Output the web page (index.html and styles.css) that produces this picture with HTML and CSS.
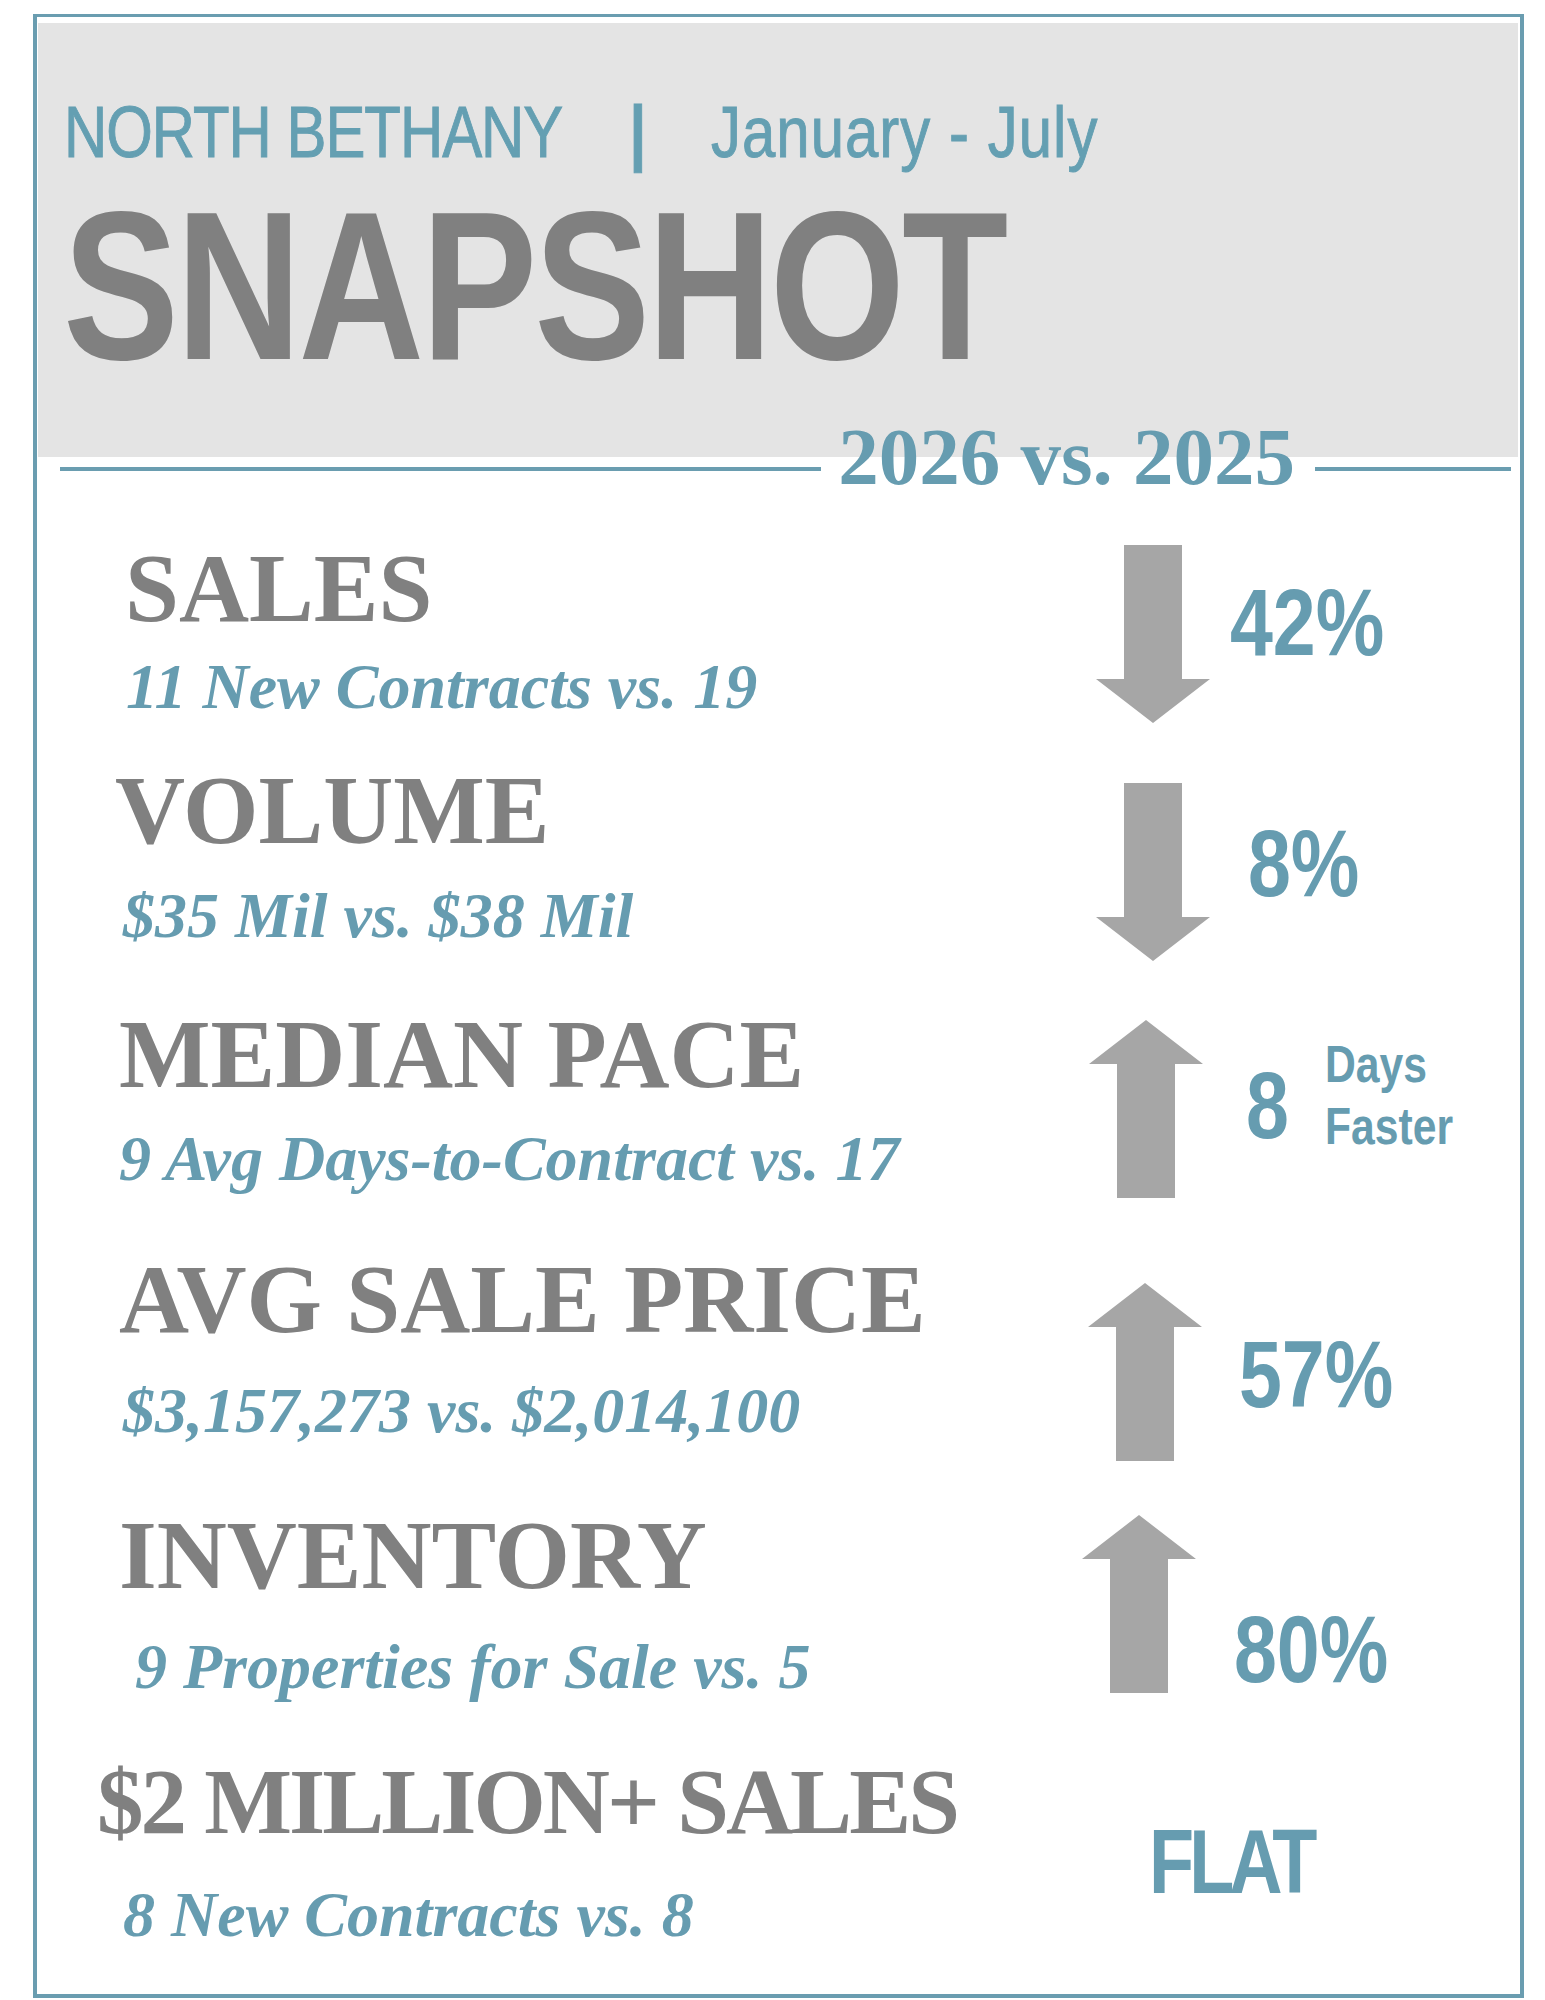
FILE: index.html
```html
<!DOCTYPE html>
<html lang="en">
<head>
<meta charset="utf-8">
<title>North Bethany Snapshot</title>
<link rel="stylesheet" href="styles.css">
</head>
<body>
<div class="card">
  <header class="hero">
    <div class="kicker"><span>NORTH BETHANY</span><span class="sep">|</span><span class="period">January - July</span></div>
    <h1 class="title">SNAPSHOT</h1>
  </header>
  <div class="legend">
    <span class="rule"></span>
    <span class="legend-text">2026 vs. 2025</span>
    <span class="rule rule-right"></span>
  </div>
  <div class="stats">
    <div class="row r1">
      <div class="text"><div class="label">SALES</div><div class="sub">11 New Contracts vs. 19</div></div>
      <div class="indicator">
        <svg class="arrow" viewBox="0 0 114 178"><path d="M28 0H86V134H114L57 178L0 134H28Z"/></svg>
        <div class="value">42%</div>
      </div>
    </div>
    <div class="row r2">
      <div class="text"><div class="label">VOLUME</div><div class="sub">$35 Mil vs. $38 Mil</div></div>
      <div class="indicator">
        <svg class="arrow" viewBox="0 0 114 178"><path d="M28 0H86V134H114L57 178L0 134H28Z"/></svg>
        <div class="value">8%</div>
      </div>
    </div>
    <div class="row r3">
      <div class="text"><div class="label">MEDIAN PACE</div><div class="sub">9 Avg Days-to-Contract vs. 17</div></div>
      <div class="indicator">
        <svg class="arrow" viewBox="0 0 114 178"><path d="M57 0L114 44H86V178H28V44H0Z"/></svg>
        <div class="value">8</div>
        <div class="unit">Days<br>Faster</div>
      </div>
    </div>
    <div class="row r4">
      <div class="text"><div class="label">AVG SALE PRICE</div><div class="sub">$3,157,273 vs. $2,014,100</div></div>
      <div class="indicator">
        <svg class="arrow" viewBox="0 0 114 178"><path d="M57 0L114 44H86V178H28V44H0Z"/></svg>
        <div class="value">57%</div>
      </div>
    </div>
    <div class="row r5">
      <div class="text"><div class="label">INVENTORY</div><div class="sub">9 Properties for Sale vs. 5</div></div>
      <div class="indicator">
        <svg class="arrow" viewBox="0 0 114 178"><path d="M57 0L114 44H86V178H28V44H0Z"/></svg>
        <div class="value">80%</div>
      </div>
    </div>
    <div class="row r6">
      <div class="text"><div class="label">$2 MILLION+ SALES</div><div class="sub">8 New Contracts vs. 8</div></div>
      <div class="indicator">
        <div class="value">FLAT</div>
      </div>
    </div>
  </div>
</div>
</body>
</html>
```
FILE: styles.css
```css
body {
  margin: 0;
  background: #ffffff;
}

.card {
  box-sizing: border-box;
  width: 1491px;
  height: 1984px;
  margin: 14px 0 0 33px;
  border: 4px solid #6a9db0;
  border-top-width: 3px;
  padding: 6px 2px 0 1px;
}

.hero {
  box-sizing: border-box;
  height: 434px;
  background: #e4e4e4;
  padding: 68.7px 0 0 26px;
}

/* narrow sans: Liberation Sans condensed to Arial Narrow proportions */
.kicker,
.title,
.value,
.unit {
  font-family: "Liberation Sans", Arial, sans-serif;
  transform: scaleX(0.82);
  transform-origin: 0 0;
}

.kicker {
  font-size: 73px;
  line-height: 80px;
  color: #649fb2;
  letter-spacing: -1.2px;
  white-space: nowrap;
  -webkit-text-stroke: 1px #649fb2;
}

.sep {
  display: inline-block;
  font-weight: 700;
  margin: 0 80px 0 82px;
}

.period {
  letter-spacing: 1.3px;
}

.title {
  margin: 8.8px 0 0 -1px;
  font-weight: 700;
  font-size: 212px;
  line-height: 212px;
  letter-spacing: -3.6px;
  color: #808080;
}

.legend {
  display: flex;
  height: 81px;
  margin-top: -40px;
  padding: 0 7px 0 22px;
}

.rule {
  flex: 1;
  height: 4px;
  margin-top: 50px;
  background: #6a9db0;
}

.rule-right {
  flex: 0 0 196px;
}

.legend-text {
  margin: 0 20px 0 17px;
  font-family: "Liberation Serif", "Times New Roman", serif;
  font-weight: 700;
  font-size: 81px;
  line-height: 81px;
  color: #669cb0;
  white-space: nowrap;
}

.stats {
  margin-top: 41.6px;
  padding-left: 81px;
}

.row {
  display: flex;
}

.text {
  flex: none;
  width: 963px;
}

.label {
  font-family: "Liberation Serif", "Times New Roman", serif;
  font-weight: 700;
  font-size: 97px;
  line-height: 97px;
  color: #808080;
  white-space: nowrap;
}

.sub {
  margin-left: 4px;
  font-family: "Liberation Serif", "Times New Roman", serif;
  font-weight: 700;
  font-style: italic;
  font-size: 64px;
  line-height: 64px;
  color: #669cb0;
  white-space: nowrap;
}

.indicator {
  display: flex;
  align-items: flex-start;
}

.arrow {
  flex: none;
  width: 114px;
  height: 178px;
  fill: #a6a6a6;
}

.value {
  font-weight: 700;
  font-size: 94px;
  line-height: 94px;
  color: #669cb0;
  white-space: nowrap;
}

.unit {
  font-weight: 700;
  font-size: 52px;
  line-height: 62px;
  color: #669cb0;
  white-space: nowrap;
}

/* row 1: sales */
.r1 { height: 222px; }
.r1 .label { margin-left: 6px; }
.r1 .sub { margin: 18.6px 0 0 7px; }
.r1 .arrow { margin: 5px 0 0 14px; }
.r1 .value { margin: 36px 0 0 20px; }

/* row 2: volume */
.r2 { height: 244px; }
.r2 .label { margin-left: -4px; }
.r2 .sub { margin-top: 25.6px; }
.r2 .arrow { margin: 21px 0 0 14px; }
.r2 .value { margin: 55px 0 0 38px; }

/* row 3: median pace */
.r3 { height: 245px; }
.r3 .sub { margin: 24.6px 0 0 0; }
.r3 .arrow { margin: 14px 0 0 7px; }
.r3 .value { margin: 53px 0 0 43px; }
.r3 .unit { margin: 27px 0 0 27px; }

/* row 4: avg sale price */
.r4 { height: 256px; }
.r4 .sub { margin-top: 31.6px; }
.r4 .arrow { margin: 32px 0 0 6px; }
.r4 .value { margin: 77px 0 0 37px; }

/* row 5: inventory */
.r5 { height: 248.3px; }
.r5 .sub { margin: 31.6px 0 0 16px; }
.r5 .arrow { margin: 8px 0 0 0; }
.r5 .value { margin: 96px 0 0 38px; }

/* row 6: $2 million+ sales */
.r6 .label {
  margin-left: -22px;
  font-size: 93px;
  line-height: 93px;
  letter-spacing: -3px;
}
.r6 .sub { margin-top: 35px; }
.r6 .value {
  margin: 62px 0 0 67px;
  font-size: 90px;
  line-height: 90px;
  letter-spacing: -6px;
}
```
